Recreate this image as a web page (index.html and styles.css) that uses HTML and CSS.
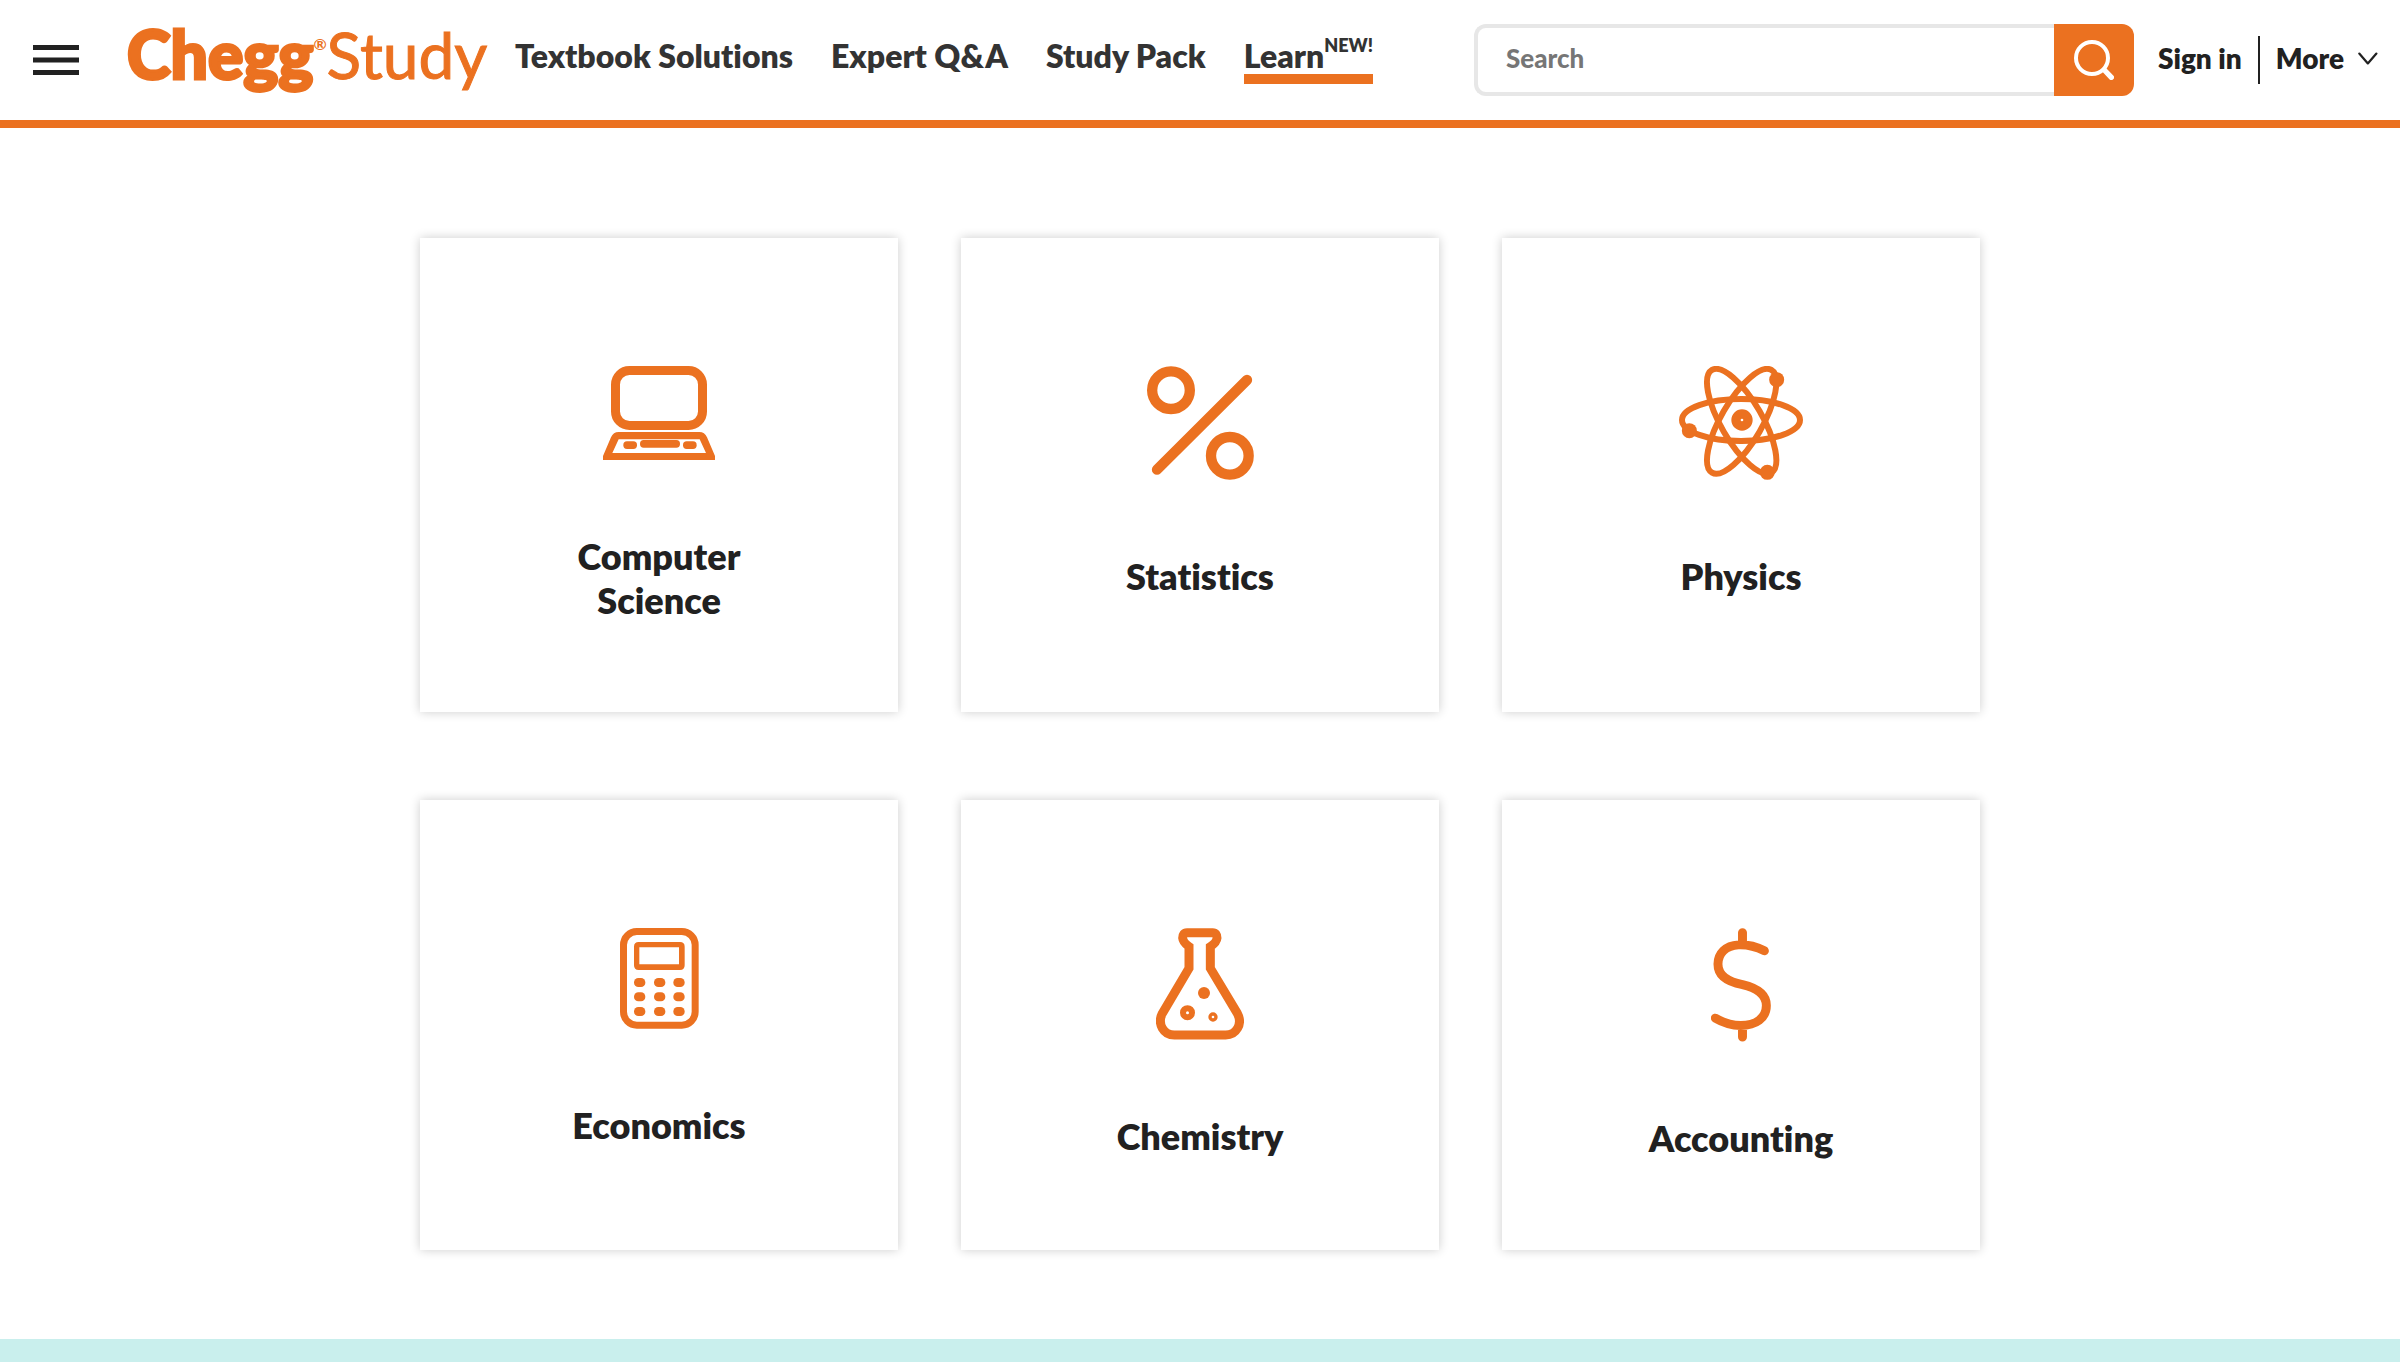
FILE: index.html
```html
<!DOCTYPE html>
<html lang="en">
<head>
<meta charset="utf-8">
<meta name="viewport" content="width=device-width, initial-scale=1">
<title>Chegg Study</title>
<link rel="stylesheet" href="styles.css">
</head>
<body>
<header class="header">
  <button class="menu-button" type="button" aria-label="Open menu">
    <svg width="46" height="30" viewBox="0 0 46 30" fill="currentColor"><path d="M0 0h46v5H0zM0 12.500h46v5H0zM0 25h46v5H0z"/></svg>
  </button>
  <a class="logo" href="#"><span class="logo-brand">Chegg</span><span class="logo-mark">®</span><span class="logo-product">Study</span></a>
  <nav class="nav">
    <a class="nav-link" href="#">Textbook Solutions</a>
    <a class="nav-link" href="#">Expert Q&amp;A</a>
    <a class="nav-link" href="#">Study Pack</a>
    <a class="nav-link nav-link-active" href="#">Learn<span class="nav-badge">NEW!</span></a>
  </nav>
  <form class="search">
    <input class="search-input" type="text" placeholder="Search" aria-label="Search">
    <button class="search-button" type="submit" aria-label="Submit search">
      <svg width="40" height="40" viewBox="432 120 120 120" fill="none" stroke="currentColor" stroke-linecap="round"><circle cx="486" cy="174" r="48" stroke-width="12"/><path d="M523 210l21 22" stroke-width="16"/></svg>
    </button>
  </form>
  <div class="account">
    <a class="account-link" href="#">Sign in</a>
    <button class="account-link more-button" type="button">More
      <svg width="20" height="13" viewBox="1283 159 63 41" fill="none" stroke="currentColor" stroke-width="7" stroke-linecap="round" stroke-linejoin="round"><path d="M1287 164l27 31 27-31"/></svg>
    </button>
  </div>
</header>
<main class="subjects">
  <a class="card" href="#">
    <svg width="112" height="94" viewBox="126 78 336 282"><rect x="163.500" y="91.500" width="261" height="165" rx="42" fill="none" stroke="currentColor" stroke-width="27"/><path fill="currentColor" fill-rule="evenodd" d="M126 360v-12l24-56q7-16 23-16h242q16 0 23 16l24 56v12zM173 298l-19 41h281l-19-41z"/><g fill="currentColor"><rect x="187" y="304" width="41" height="23" rx="11"/><rect x="237" y="300" width="120" height="23" rx="11"/><rect x="366" y="304" width="41" height="23" rx="11"/></g></svg>
    <h2 class="card-title">Computer Science</h2>
  </a>
  <a class="card" href="#">
    <svg width="107" height="114" viewBox="138 79 321 342" fill="none" stroke="currentColor" stroke-width="31" stroke-linecap="round"><circle cx="210" cy="151.500" r="56.500"/><circle cx="386.500" cy="348.500" r="56.500"/><path d="M168 390L438 121"/></svg>
    <h2 class="card-title">Statistics</h2>
  </a>
  <a class="card" href="#">
    <svg width="124" height="114" viewBox="117 78 372 342"><g fill="none" stroke="currentColor" stroke-width="18"><ellipse cx="303" cy="240" rx="177" ry="63"/><ellipse cx="305" cy="244" rx="178" ry="62" transform="rotate(60 305 244)"/><ellipse cx="305" cy="244" rx="178" ry="62" transform="rotate(-60 305 244)"/><circle cx="306" cy="240" r="18" stroke-width="28"/></g><g fill="currentColor"><circle cx="410" cy="119" r="22.500"/><circle cx="148" cy="272" r="22.500"/><circle cx="382" cy="397" r="22.500"/></g></svg>
    <h2 class="card-title">Physics</h2>
  </a>
  <a class="card" href="#">
    <svg width="79" height="101" viewBox="174 84 237 303"><rect x="184.500" y="94.500" width="215" height="281" rx="40" fill="none" stroke="currentColor" stroke-width="21"/><path fill="currentColor" fill-rule="evenodd" d="M230 126h124q14 0 14 14v56q0 14-14 14H230q-14 0-14-14v-56q0-14 14-14zM232 142v51h119v-51z"/><g fill="currentColor"><rect x="216" y="234" width="34" height="27" rx="13"/><rect x="276" y="234" width="34" height="27" rx="13"/><rect x="334" y="234" width="34" height="27" rx="13"/><rect x="216" y="277" width="34" height="27" rx="13"/><rect x="276" y="277" width="34" height="27" rx="13"/><rect x="334" y="277" width="34" height="27" rx="13"/><rect x="216" y="321" width="34" height="27" rx="13"/><rect x="276" y="321" width="34" height="27" rx="13"/><rect x="334" y="321" width="34" height="27" rx="13"/></g></svg>
    <h2 class="card-title">Economics</h2>
  </a>
  <a class="card" href="#">
    <svg width="88" height="112" viewBox="165 87 264 336"><path fill="none" stroke="currentColor" stroke-width="27" d="M258 101H335Q348 101 348 117Q347 130 328 143V208L409 343C426 375 406 408 374 408H220C188 408 168 375 184 343L264 208V143Q246 130 245 117Q245 101 258 101Z"/><circle cx="309" cy="282" r="18" fill="currentColor"/><g fill="none" stroke="currentColor"><circle cx="259.500" cy="341" r="13.500" stroke-width="18"/><circle cx="336" cy="354" r="9" stroke-width="10"/></g></svg>
    <h2 class="card-title">Chemistry</h2>
  </a>
  <a class="card" href="#">
    <svg width="60" height="114" viewBox="215 87 181 342" fill="none" stroke="currentColor" stroke-width="27" stroke-linecap="round"><path d="M310 100V134M310 384V415M376 155C350 142 322 136 298 137C258 139 236 164 236 195C236 232 266 249 310 257C356 268 382 288 382 320C382 358 350 380 305 380C280 380 250 371 228 358"/></svg>
    <h2 class="card-title">Accounting</h2>
  </a>
</main>
<footer class="band"></footer>
</body>
</html>
```
FILE: styles.css
```css
:root {
  --orange: #eb7120;
  --ink: #212121;
  --ink-soft: #333333;
  --line: #e7e7e7;
}

* {
  box-sizing: border-box;
}

body {
  margin: 0;
  min-height: 100vh;
  display: flex;
  flex-direction: column;
  background: #ffffff;
  color: var(--ink);
  font-family: Lato, "Open Sans", sans-serif;
  font-variant-ligatures: none;
}

a {
  color: inherit;
  text-decoration: none;
}

button {
  padding: 0;
  border: 0;
  background: none;
  color: inherit;
  font: inherit;
  cursor: pointer;
}

svg {
  display: block;
  flex: none;
}

.header {
  display: flex;
  align-items: center;
  height: 128px;
  padding: 0 22px 0 33px;
  border-bottom: 8px solid var(--orange);
}

.menu-button {
  margin-right: 48px;
}

.logo {
  display: flex;
  align-items: baseline;
  width: 388px;
  padding-bottom: 12px;
  color: var(--orange);
  line-height: 76px;
}

.logo-brand {
  font-size: 66px;
  font-weight: 900;
  -webkit-text-stroke: 3px var(--orange);
}

.logo-mark {
  align-self: flex-start;
  font-size: 16px;
  font-weight: 700;
  line-height: 56px;
}

.logo-product {
  font-size: 64px;
  -webkit-text-stroke: 1px var(--orange);
}

.nav {
  display: flex;
  gap: 38px;
  white-space: nowrap;
  color: var(--ink-soft);
}

.nav-link {
  display: flex;
  padding-top: 2px;
  border-bottom: 10px solid transparent;
  font-size: 32px;
  font-weight: 800;
  line-height: 36px;
}

.nav-link-active {
  border-color: var(--orange);
}

.nav-badge {
  font-size: 18px;
  line-height: 14px;
}

.search {
  display: flex;
  flex: 0 1 660px;
  height: 72px;
  margin-left: auto;
}

.search-input {
  flex: 1;
  min-width: 0;
  padding: 0 28px 4px;
  border: 4px solid var(--line);
  border-right: 0;
  border-radius: 12px 0 0 12px;
  background: #ffffff;
  color: var(--ink);
  font-family: inherit;
  font-size: 26px;
  font-weight: 900;
}

.search-input::placeholder {
  color: #767676;
  opacity: 1;
}

.search-button {
  display: grid;
  place-items: center;
  width: 80px;
  border-radius: 0 12px 12px 0;
  background: var(--orange);
  color: #ffffff;
}

.account {
  display: flex;
  align-items: center;
  margin-left: 24px;
  white-space: nowrap;
}

.account-link {
  padding-bottom: 4px;
  font-size: 28px;
  font-weight: 800;
  line-height: 44px;
}

.more-button {
  display: flex;
  align-items: center;
  gap: 14px;
  margin-left: 16px;
  padding-left: 16px;
  border-left: 2px solid var(--ink);
}

.subjects {
  display: grid;
  grid-template-columns: repeat(3, 1fr);
  gap: 88px 63px;
  width: 65%;
  margin: 0 auto;
  padding: 110px 0 89px;
}

.card {
  display: flex;
  flex-direction: column;
  align-items: center;
  gap: 74px;
  padding: 128px 130px 90px;
  box-shadow: 0 0 10px rgba(0, 0, 0, 0.2);
  color: var(--orange);
}

.card-title {
  margin: 0;
  color: var(--ink);
  font-size: 36px;
  font-weight: 800;
  line-height: 44px;
  text-align: center;
}

.band {
  flex: 1;
  min-height: 21px;
  background: #c9efed;
}
```
